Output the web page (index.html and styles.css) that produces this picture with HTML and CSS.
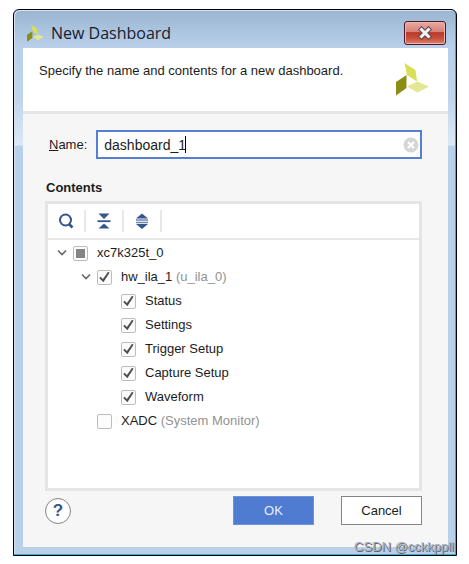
FILE: index.html
```html
<!DOCTYPE html>
<html lang="en">
<head>
<meta charset="utf-8">
<title>New Dashboard</title>
<link rel="stylesheet" href="styles.css">
</head>
<body>
<svg class="defs" width="0" height="0" aria-hidden="true">
  <symbol id="logo" viewBox="0 0 33 33">
    <path d="M8.500 0 19.500 7 21 18.500 11 12z" fill="#dade59"/>
    <path d="M10.500 12v13L0 32.500V19z" fill="#8c8e13"/>
    <path d="M11 23.500 21.500 18.500 33 23.500 21.500 29.500z" fill="#e3e692"/>
  </symbol>
  <symbol id="chevron" viewBox="0 0 10 8">
    <path d="M1 1.500 5 5.500 9 1.500" fill="none" stroke="#666" stroke-width="1.600"/>
  </symbol>
</svg>
<main class="window">
  <header class="titlebar">
    <svg class="app-icon" aria-hidden="true"><use href="#logo"/></svg>
    <h1 class="title">New Dashboard</h1>
    <button class="close" type="button" aria-label="Close">
      <svg width="16" height="14" viewBox="0 0 16 14" aria-hidden="true">
        <path d="M4.500 3.500 11.500 10.500M11.500 3.500 4.500 10.500" stroke="#5c4a54" stroke-width="5" stroke-linecap="square"/>
        <path d="M4.500 3.500 11.500 10.500M11.500 3.500 4.500 10.500" stroke="#f4f4f4" stroke-width="3" stroke-linecap="square"/>
      </svg>
    </button>
  </header>
  <form class="client">
    <div class="intro">
      <p class="intro-text">Specify the name and contents for a new dashboard.</p>
      <svg class="logo" aria-hidden="true"><use href="#logo"/></svg>
    </div>
    <div class="content">
      <div class="name-row">
        <label for="name"><u>N</u>ame:</label>
        <div class="field">
          <input id="name" type="text" value="dashboard_1">
          <span class="caret"></span>
          <button class="clear" type="button" aria-label="Clear">
            <svg width="16" height="16" viewBox="0 0 16 16" aria-hidden="true">
              <circle cx="8" cy="8" r="7.500" fill="#d6d6d6"/>
              <path d="M5 5 11 11M11 5 5 11" stroke="#fff" stroke-width="2"/>
            </svg>
          </button>
        </div>
      </div>
      <h2 class="section">Contents</h2>
      <section class="panel">
        <div class="toolbar">
          <button class="tool" type="button" aria-label="Search">
            <svg width="18" height="18" viewBox="0 0 18 18" aria-hidden="true">
              <circle cx="8.500" cy="8" r="5.500" fill="none" stroke="#36558f" stroke-width="2"/>
              <path d="M12 12 15.500 15.500" stroke="#36558f" stroke-width="2.600"/>
            </svg>
          </button>
          <button class="tool" type="button" aria-label="Collapse all">
            <svg width="18" height="18" viewBox="0 0 18 18" aria-hidden="true">
              <path d="M3.500 1.500h11L9 7zM3.500 16.500h11L9 11.500z" fill="#36558f"/>
              <path d="M2.500 9.200h13" stroke="#36558f" stroke-width="1.800"/>
            </svg>
          </button>
          <button class="tool" type="button" aria-label="Expand all">
            <svg width="18" height="18" viewBox="0 0 18 18" aria-hidden="true">
              <path d="M3 6.500h12L9 1.500zM3 12h12L9 17z" fill="#36558f"/>
              <path d="M3 8h12M3 10.500h12" stroke="#6f88b5" stroke-width="1.400"/>
            </svg>
          </button>
        </div>
        <ul class="tree">
          <li>
            <div class="row">
              <button class="toggle" type="button" aria-label="Collapse xc7k325t_0"><svg class="chevron" aria-hidden="true"><use href="#chevron"/></svg></button>
              <label class="item"><input class="mixed" type="checkbox">xc7k325t_0</label>
            </div>
            <ul>
              <li>
                <div class="row">
                  <button class="toggle" type="button" aria-label="Collapse hw_ila_1"><svg class="chevron" aria-hidden="true"><use href="#chevron"/></svg></button>
                  <label class="item"><input type="checkbox" checked><span>hw_ila_1 <span class="note">(u_ila_0)</span></span></label>
                </div>
                <ul>
                  <li class="row leaf"><label class="item"><input type="checkbox" checked>Status</label></li>
                  <li class="row leaf"><label class="item"><input type="checkbox" checked>Settings</label></li>
                  <li class="row leaf"><label class="item"><input type="checkbox" checked>Trigger Setup</label></li>
                  <li class="row leaf"><label class="item"><input type="checkbox" checked>Capture Setup</label></li>
                  <li class="row leaf"><label class="item"><input type="checkbox" checked>Waveform</label></li>
                </ul>
              </li>
              <li class="row leaf"><label class="item"><input type="checkbox"><span>XADC <span class="note">(System Monitor)</span></span></label></li>
            </ul>
          </li>
        </ul>
      </section>
      <footer class="actions">
        <button class="help" type="button" aria-label="Help">?</button>
        <button class="button primary" type="submit">OK</button>
        <button class="button" type="button">Cancel</button>
      </footer>
    </div>
  </form>
  <span class="watermark">CSDN @cckkppll</span>
</main>
</body>
</html>
```
FILE: styles.css
```css
* {
  box-sizing: border-box;
}

body {
  margin: 0;
  min-height: 100vh;
  display: flex;
  padding: 9px 12px 8px 13px;
  background: #fff;
  color: #1c1c1c;
  font: 13px/16px "Liberation Sans", Arial, sans-serif;
}

h1, h2, p, ul {
  margin: 0;
  padding: 0;
}

ul {
  list-style: none;
}

button {
  padding: 0;
  border: 0;
  background: none;
  font: inherit;
  color: inherit;
}

svg {
  display: block;
}

.defs {
  position: absolute;
}

.window {
  position: relative;
  flex: 1;
  display: flex;
  flex-direction: column;
  padding: 0 8px 8px 9px;
  border: 1px solid #000;
  border-radius: 6px 6px 0 0;
  background: linear-gradient(#9ab5d2, #b9d0ea 38px, #c0d5ed 90px, #dce9f6 135px, #b9d0ea 136px);
  box-shadow: inset -1px -1px #25b5d2, inset 1px 1px #d4e2f1;
}

.titlebar {
  height: 38px;
  display: flex;
  align-items: center;
  gap: 7px;
  padding: 8px 2px 0 4px;
}

.app-icon {
  width: 17px;
  height: 17px;
}

.title {
  flex: 1;
  font: 16px/24px "Open Sans", sans-serif;
  color: #17202c;
}

.close {
  width: 42px;
  height: 24px;
  display: grid;
  place-items: center;
  border: 1px solid #4a1a28;
  border-radius: 3px;
  background: linear-gradient(#e8aaa2, #d98076 45%, #b83a28 48%, #c8503c 75%, #dc8070);
  box-shadow: inset 0 0 0 1px #eab5ac;
}

.client {
  flex: 1;
  display: flex;
  flex-direction: column;
  background: #f6f6f6;
}

.intro {
  display: flex;
  justify-content: space-between;
  height: 66px;
  padding: 15px 19px 0 16px;
  border-bottom: 3px solid #e5e5e5;
  background: #fff;
}

.logo {
  width: 33px;
  height: 33px;
}

.content {
  flex: 1;
  display: flex;
  flex-direction: column;
  padding: 16px 26px 22px 22px;
}

.name-row {
  display: flex;
  align-items: center;
  gap: 9px;
  padding-left: 4px;
}

.field {
  position: relative;
  flex: 1;
  height: 29px;
  display: flex;
  align-items: center;
  padding: 0 1px 0 6px;
  border: 2px solid #5380d2;
  background: #fff;
}

.field input {
  flex: 1;
  min-width: 0;
  padding: 0;
  border: 0;
  outline: 0;
  background: none;
  color: inherit;
  font: 14px/20px "Liberation Sans", Arial, sans-serif;
}

.caret {
  position: absolute;
  left: 87px;
  top: 4px;
  width: 1px;
  height: 17px;
  background: #000;
}

.section {
  margin: 21px 0 5px 1px;
  font: bold 13px/16px "Liberation Sans", Arial, sans-serif;
}

.panel {
  flex: 1;
  border: 3px solid #e5e5e5;
  background: #fff;
}

.toolbar {
  display: flex;
  align-items: center;
  height: 36px;
  border-bottom: 2px solid #e8e8e8;
}

.tool {
  width: 38px;
  height: 22px;
  display: grid;
  place-items: center;
  border-right: 2px solid #e8e8e8;
}

.tree {
  padding: 1px 0 0 9px;
}

.tree ul {
  padding-left: 24px;
}

.row {
  display: flex;
  align-items: center;
  gap: 6px;
  height: 24px;
}

.leaf {
  padding-left: 16px;
}

.toggle,
.chevron {
  width: 10px;
  height: 8px;
}

.item {
  display: flex;
  align-items: center;
  gap: 9px;
}

.item input {
  appearance: none;
  width: 15px;
  height: 15px;
  margin: 0;
  display: grid;
  place-items: center;
  border: 1px solid #bcbcbc;
  border-radius: 2px;
  background: #fcfcfc;
}

.item input:checked::before {
  content: "";
  width: 11px;
  height: 11px;
  background: #505050;
  clip-path: polygon(2% 60%, 15% 48%, 36% 68%, 82% 2%, 96% 12%, 40% 98%);
}

.item .mixed::before {
  content: "";
  width: 9px;
  height: 9px;
  background: #858585;
}

.note {
  color: #929292;
}

.actions {
  display: flex;
  align-items: center;
  gap: 27px;
  margin-top: 5px;
}

.help {
  width: 26px;
  height: 26px;
  margin-right: auto;
  border: 1px solid #858585;
  border-radius: 50%;
  background: #fff;
  color: #36558f;
  font: bold 17px/24px "Liberation Sans", Arial, sans-serif;
}

.button {
  width: 81px;
  height: 29px;
  border: 1px solid #858585;
  background: #fff;
}

.primary {
  border-color: #6c92dc;
  background: #4f7bd0;
  color: #e8effc;
}

.watermark {
  position: absolute;
  right: 2px;
  bottom: 0;
  color: #a5adb8;
  font: 13px/16px "Liberation Sans", Arial, sans-serif;
  text-shadow: 1px 1px #5d6570;
}
```
